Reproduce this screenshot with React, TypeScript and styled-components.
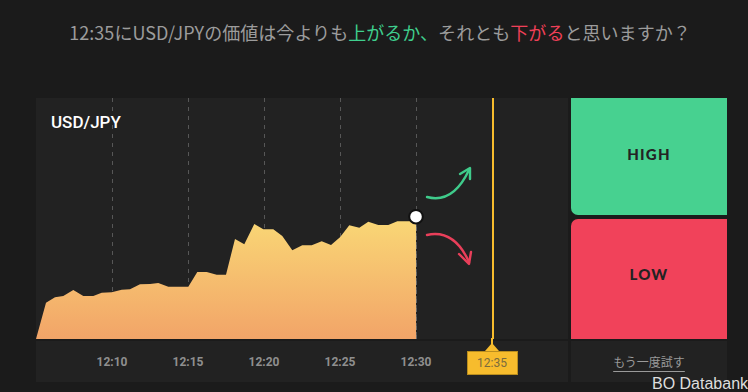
import React from "react";
import styled, { createGlobalStyle } from "styled-components";

const GlobalStyle = createGlobalStyle`
  html, body { margin: 0; padding: 0; background: #1b1b1b; }
  body { font-family: "Noto Sans CJK JP", "Noto Sans", sans-serif; }
`;

const Page = styled.div`
  position: relative;
  width: 748px;
  height: 392px;
  overflow: hidden;
  background: #1b1b1b;
`;

const Title = styled.h1`
  margin: 0 0 0 30px;
  width: 700px;
  height: 98px;
  box-sizing: border-box;
  padding-top: 20px;
  text-align: center;
  font-family: "Noto Sans CJK JP", sans-serif;
  font-weight: 400;
  font-size: 18px;
  line-height: 24px;
  color: #9c9c9c;
  letter-spacing: 0.05px;
`;

const Tone = styled.span<{ $tone: "up" | "down" }>`
  color: ${(p) => (p.$tone === "up" ? "#3fcf8e" : "#ef4058")};
`;

const Board = styled.div`
  margin-left: 36px;
  display: grid;
  grid-template-columns: 532px 156px;
  grid-template-rows: 241px 41px;
  column-gap: 3px;
  row-gap: 2px;
`;

const ChartPanel = styled.div`
  position: relative;
  background: #222222;
  overflow: visible;
`;

const PairLabel = styled.div`
  position: absolute;
  left: 15px;
  top: 14px;
  font-family: Roboto, "Liberation Sans", sans-serif;
  font-weight: 500;
  font-size: 17px;
  color: #ffffff;
`;

const ChartSvg = styled.svg`
  display: block;
`;

const Buttons = styled.div`
  position: relative;
  display: grid;
  grid-template-rows: 117px 120px;
  row-gap: 4px;
  &::before {
    content: "";
    position: absolute;
    left: -2px;
    top: 114px;
    border-top: 5px solid transparent;
    border-bottom: 5px solid transparent;
    border-left: 6px solid #1b1b1b;
  }
`;

const TradeButton = styled.button<{ $kind: "high" | "low" }>`
  border: none;
  margin: 0;
  padding: 0 0 ${(p) => (p.$kind === "high" ? "5px" : "10px")};
  display: flex;
  align-items: center;
  justify-content: center;
  background: ${(p) => (p.$kind === "high" ? "#47d190" : "#f1425a")};
  border-radius: ${(p) => (p.$kind === "high" ? "0 0 0 7px" : "7px 0 0 0")};
  font-family: Lato, "Open Sans", sans-serif;
  font-weight: 900;
  font-size: 15px;
  letter-spacing: 1.2px;
  color: #232323;
  cursor: pointer;
`;

const Axis = styled.div`
  display: flex;
  align-items: center;
  padding-left: 38px;
  background: #222222;
`;

const Tick = styled.div`
  width: 76px;
  display: flex;
  justify-content: center;
  font-family: Roboto, "Liberation Sans", sans-serif;
  font-weight: 700;
  font-size: 12px;
  color: #8f8f8f;
`;

const ExpiryTag = styled.div`
  position: relative;
  margin-top: 3px;
  width: 51px;
  height: 24px;
  box-sizing: border-box;
  display: flex;
  align-items: center;
  justify-content: center;
  background: #f7bc2d;
  border: 1px solid #b98d1e;
  font-family: Roboto, "Liberation Sans", sans-serif;
  font-weight: 400;
  font-size: 12px;
  color: #7a6b3d;
  &::before {
    content: "";
    position: absolute;
    left: 50%;
    top: -9px;
    margin-left: -7px;
    border-left: 7px solid transparent;
    border-right: 7px solid transparent;
    border-bottom: 8px solid #f7bc2d;
  }
  &::after {
    content: "";
    position: absolute;
    left: 50%;
    top: -14px;
    margin-left: -1px;
    width: 2px;
    height: 7px;
    background: #f7bc2d;
  }
`;

const RetryCell = styled.div`
  background: #222222;
  display: flex;
  align-items: center;
  justify-content: center;
`;

const RetryLink = styled.a`
  font-family: "Noto Sans CJK JP", sans-serif;
  font-size: 12px;
  color: #9a9a9a;
  text-decoration: underline;
  text-underline-offset: 4px;
  cursor: pointer;
`;

const Watermark = styled.div`
  position: absolute;
  left: 652px;
  top: 375px;
  font-family: "Liberation Sans", Arial, sans-serif;
  font-size: 16px;
  line-height: 18px;
  color: #dedede;
  white-space: nowrap;
`;

const points: [number, number][] = [
  [0, 241], [10, 204.7], [19, 199.3], [27.3, 198], [37.3, 192], [47.3, 198], [57.3, 198],
  [65.7, 194.7], [75.7, 194.3], [85.7, 191.7], [94, 191.3], [104, 186.3], [114, 186],
  [122.3, 185], [132.3, 188.7], [142.3, 188.7], [152.3, 188.7], [161.3, 174], [170.7, 174],
  [180.7, 176.7], [190, 176.7], [199, 141], [208.3, 146.3], [218.3, 126], [227.3, 131.3],
  [237.3, 131.3], [246.3, 138], [256.3, 152.3], [266.3, 147.3], [275.7, 147.3], [285.7, 143.3],
  [295, 147], [304, 139.3], [313.3, 127.3], [323.3, 129.7], [332.3, 123.7], [342.3, 127],
  [352.3, 127], [361.3, 123.3], [370.7, 123.3], [380, 123.3],
];

const areaPath =
  points.map(([x, y], i) => `${i === 0 ? "M" : "L"}${x} ${y}`).join(" ") + " L380 241 Z";

const grid = [76, 152, 228, 304, 380];
const labels = ["12:10", "12:15", "12:20", "12:25", "12:30"];

function Chart() {
  return (
    <ChartSvg width="532" height="241" viewBox="0 0 532 241">
      <defs>
        <linearGradient id="area" x1="0" y1="0" x2="0" y2="1">
          <stop offset="0" stopColor="#f9d675" />
          <stop offset="1" stopColor="#f2a468" />
        </linearGradient>
      </defs>
      {grid.map((x) => (
        <line key={x} x1={x + 0.5} y1="0" x2={x + 0.5} y2="241" stroke="#575757" strokeWidth="1" strokeDasharray="4 5" />
      ))}
      <path d={areaPath} fill="url(#area)" />
      <line x1="380.5" y1="120" x2="380.5" y2="241" stroke="#6a6a6a" strokeWidth="1" strokeDasharray="4 5" />
      <line x1="457" y1="0" x2="457" y2="241" stroke="#f7bc2d" strokeWidth="2" />
      <g fill="none" strokeWidth="2.4" strokeLinecap="round" strokeLinejoin="round">
        <path d="M391 99 Q417 106 433 72" stroke="#3fcb8b" />
        <path d="M424 76 L434 70 L434 81" stroke="#3fcb8b" />
        <path d="M391 137 Q418 131 433 164" stroke="#e93f5a" />
        <path d="M423 156 L433 166 L435 154" stroke="#e93f5a" />
      </g>
      <circle cx="380" cy="118.7" r="6.8" fill="#ffffff" stroke="#111111" strokeWidth="2" />
    </ChartSvg>
  );
}

export default function App() {
  return (
    <>
      <GlobalStyle />
      <Page>
        <Title>
          12:35にUSD/JPYの価値は今よりも<Tone $tone="up">上がるか、</Tone>それとも
          <Tone $tone="down">下がる</Tone>と思いますか？
        </Title>
        <Board>
          <ChartPanel>
            <Chart />
            <PairLabel>USD/JPY</PairLabel>
          </ChartPanel>
          <Buttons>
            <TradeButton $kind="high">HIGH</TradeButton>
            <TradeButton $kind="low">LOW</TradeButton>
          </Buttons>
          <Axis>
            {labels.map((l) => (
              <Tick key={l}>{l}</Tick>
            ))}
            <Tick>
              <ExpiryTag>12:35</ExpiryTag>
            </Tick>
          </Axis>
          <RetryCell>
            <RetryLink>もう一度試す</RetryLink>
          </RetryCell>
        </Board>
        <Watermark>BO Databank</Watermark>
      </Page>
    </>
  );
}
